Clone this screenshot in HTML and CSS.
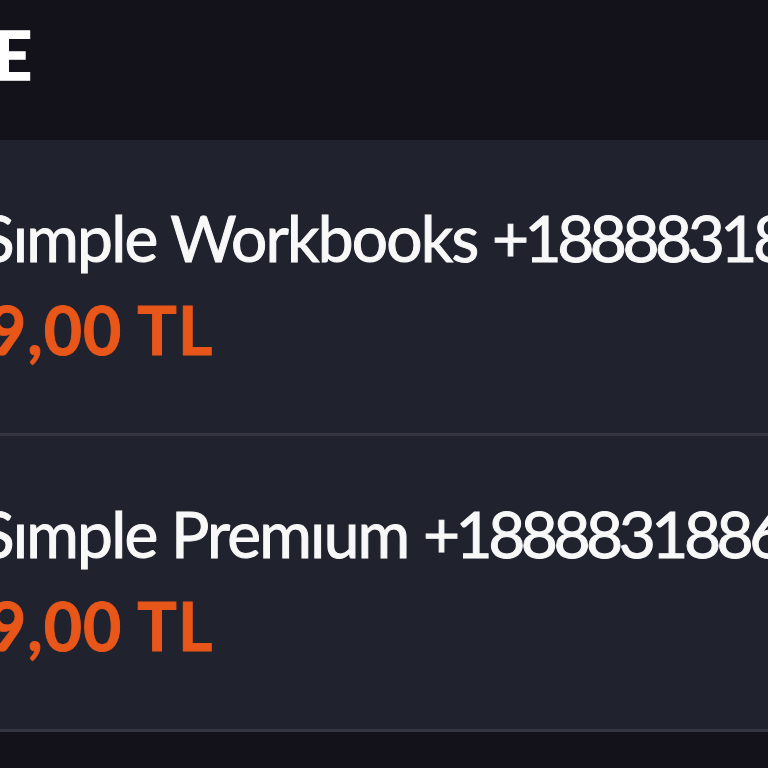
FILE: index.html
```html
<!DOCTYPE html>
<html lang="tr">
<head>
    <meta charset="UTF-8">
    <meta name="viewport" content="width=device-width, initial-scale=1.0">
    <title>Paketler</title>
    <link rel="stylesheet" href="styles.css">
</head>
<body>

    <div class="header">
        <h1 class="header-title">E</h1>
    </div>

    <div class="product-list">
        <div class="product">
            <div class="product-name">Sımple Workbooks <span class="product-code">+18888318</span></div>
            <div class="product-price">9,00 TL</div>
        </div>
        <div class="product">
            <div class="product-name">Sımple Premıum <span class="product-code">+1888831886</span></div>
            <div class="product-price">9,00 TL</div>
        </div>
    </div>

    <div class="footer"></div>

</body>
</html>
```

FILE: styles.css
```css
body {
    background-color: #13121b;
    color: #f8f8f8;
    font-family: 'Lato', 'Noto Sans', sans-serif;
    margin: 0;
    width: 768px;
    height: 768px;
    overflow: hidden;
    display: flex;
    flex-direction: column;
}
.header {
    height: 140px;
    background-color: #13121b;
    flex-shrink: 0;
    padding-top: 23px;
    box-sizing: border-box;
}
.header-title {
    margin: 0 0 0 -6px;
    font-size: 66px;
    font-weight: 700;
    -webkit-text-stroke: 1.5px #ffffff;
    line-height: 64px;
    color: #ffffff;
}
.product-list {
    background-color: #20222d;
    flex-shrink: 0;
}
.product {
    height: 296px;
    box-sizing: border-box;
    padding-top: 60px;
    border-bottom: 3px solid #343541;
    overflow: hidden;
}
.product-name {
    margin-left: -20px;
    font-size: 64px;
    font-weight: 400;
    letter-spacing: -1.8px;
    -webkit-text-stroke: 1px #f8f8f8;
    line-height: 76px;
    white-space: nowrap;
}
.product-code {
    letter-spacing: -4.5px;
}
.product-price {
    margin-left: -12px;
    margin-top: 16px;
    font-size: 66px;
    font-weight: 700;
    letter-spacing: 1px;
    -webkit-text-stroke: 1px #e8561a;
    line-height: 76px;
    color: #e8561a;
    white-space: nowrap;
}
.footer {
    flex: 1;
    background-color: #13121b;
}
```
